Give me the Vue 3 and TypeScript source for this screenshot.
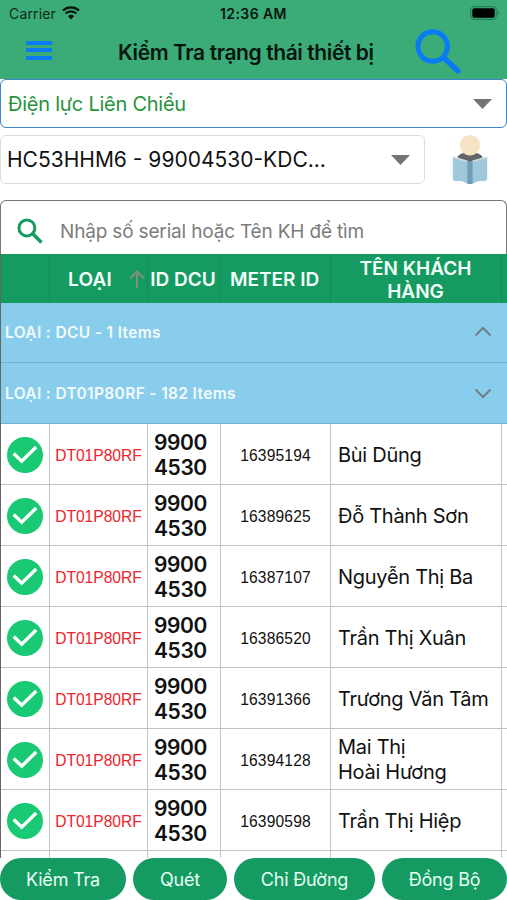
<script setup lang="ts">
interface Device {
  meter: string
  customer: string[]
}

interface Group {
  label: string
  open: boolean
}

const dcu = ['9900', '4530']
const groups: Group[] = [
  { label: 'LOẠI : DCU - 1 Items', open: false },
  { label: 'LOẠI : DT01P80RF - 182 Items', open: true },
]
const devices: Device[] = [
  { meter: '16395194', customer: ['Bùi Dũng'] },
  { meter: '16389625', customer: ['Đỗ Thành Sơn'] },
  { meter: '16387107', customer: ['Nguyễn Thị Ba'] },
  { meter: '16386520', customer: ['Trần Thị Xuân'] },
  { meter: '16391366', customer: ['Trương Văn Tâm'] },
  { meter: '16394128', customer: ['Mai Thị', 'Hoài Hương'] },
  { meter: '16390598', customer: ['Trần Thị Hiệp'] },
]
const actions: string[] = ['Kiểm Tra', 'Quét', 'Chỉ Đường', 'Đồng Bộ']
</script>

<template>
  <div class="screen">
    <header class="top">
      <div class="status">
        <span class="carrier">Carrier</span>
        <svg class="wifi" width="18" height="14" viewBox="0 0 18 14">
          <path d="M9 13.5 6 10.2a4.3 4.3 0 0 1 6 0z" fill="#07150e" />
          <path d="M3.6 7.5a7.7 7.7 0 0 1 10.8 0M1 4.5a11.7 11.7 0 0 1 16 0" fill="none" stroke="#07150e" stroke-width="2.3" />
        </svg>
        <span class="clock">12:36 AM</span>
        <svg class="battery" width="30" height="14" viewBox="0 0 30 14">
          <rect x=".7" y=".7" width="25.6" height="12.6" rx="3.6" fill="none" stroke="#257f56" stroke-width="1.2" />
          <rect x="2.3" y="2.3" width="22.4" height="9.4" rx="2" fill="#000" />
          <path d="M27.5 4.8c2.2.7 2.2 3.7 0 4.4z" fill="#257f56" />
        </svg>
      </div>
      <div class="nav">
        <button class="menu" aria-label="Menu"><i></i><i></i><i></i></button>
        <h1>Kiểm Tra trạng thái thiết bị</h1>
        <svg class="find" width="48" height="48" viewBox="0 0 48 48" fill="none" stroke="#087bf5">
          <circle cx="17.700" cy="18.500" r="14.700" stroke-width="5" />
          <path d="M29 30 42.800 42.800" stroke-width="5.600" stroke-linecap="round" />
        </svg>
      </div>
    </header>

    <div class="select unit">
      <span>Điện lực Liên Chiểu</span>
      <svg width="19" height="10" viewBox="0 0 19 10"><path d="M0 0h19L9.500 10z" fill="#747474" /></svg>
    </div>

    <div class="station-row">
      <div class="select station">
        <span>HC53HHM6 - 99004530-KDC...</span>
        <svg width="19" height="10" viewBox="0 0 19 10"><path d="M0 0h19L9.500 10z" fill="#747474" /></svg>
      </div>
      <svg class="reader" width="36" height="50" viewBox="0 0 36 50">
        <path d="M5.500 22.500c1-3.500 5-5 12.500-5s11.500 1.500 12.500 5L20 28h-4z" fill="#626467" />
        <circle cx="18" cy="10.300" r="10.200" fill="#f5e3c3" />
        <path d="M3 43h30v3H3z" fill="#536c78" />
        <path d="M.8 22.500 18 27v22q-3 0-5-1.500-2-1.500-5-1.500H3.800q-3 0-3-3z" fill="#9fc9db" />
        <path d="M35.200 22.500 18 27v22q3 0 5-1.500 2-1.500 5-1.500h4.200q3 0 3-3z" fill="#9fc9db" />
        <path d="M1 22.300 15.500 26.300M35 22.300 20.500 26.300" stroke="#d3d9db" stroke-width="1.500" />
        <path d="M15.400 26.300h5.200v22.200q-2.600 1-5.200 0z" fill="#719db5" />
      </svg>
    </div>

    <div class="search">
      <svg width="26" height="26" viewBox="0 0 26 26" fill="none" stroke="#159b62">
        <circle cx="9.900" cy="9.900" r="8" stroke-width="3" />
        <path d="m15.500 15.500 9 9" stroke-width="3.600" />
      </svg>
      <span>Nhập số serial hoặc Tên KH để tìm</span>
    </div>

    <main class="table">
      <div class="cols head">
        <div></div>
        <div class="sorted">
          <span>LOẠI</span>
          <svg width="16" height="18" viewBox="0 0 16 18" fill="none" stroke="#809080" stroke-width="2">
            <path d="M8 18V2M1 8.500 8 1.500l7 7" />
          </svg>
        </div>
        <div><span class="h-dcu">ID DCU</span></div>
        <div><span class="h-meter">METER ID</span></div>
        <div><span class="h-name">TÊN KHÁCH<br />HÀNG</span></div>
        <div></div>
      </div>

      <div v-for="g in groups" :key="g.label" class="group">
        <span>{{ g.label }}</span>
        <svg width="18" height="11" viewBox="0 0 18 11" fill="none" stroke="#6f7f89" stroke-width="2">
          <path :d="g.open ? 'M1.500 1.500 9 9l7.500-7.500' : 'M1.500 9.500 9 2l7.500 7.500'" />
        </svg>
      </div>

      <div v-for="d in devices" :key="d.meter" class="cols row">
        <div>
          <svg width="36" height="36" viewBox="0 0 36 36">
            <circle cx="18" cy="18" r="18" fill="#19c973" />
            <path d="m6.700 16.500 8 7.700 14.500-14.200" fill="none" stroke="#fff" stroke-width="3.400" />
          </svg>
        </div>
        <div class="type">DT01P80RF</div>
        <div class="dcu"><span v-for="part in dcu" :key="part">{{ part }}</span></div>
        <div class="meter">{{ d.meter }}</div>
        <div class="name"><span v-for="part in d.customer" :key="part">{{ part }}</span></div>
        <div></div>
      </div>
      <div class="cols row tail"><div v-for="n in 6" :key="n"></div></div>
    </main>

    <footer class="actions">
      <button v-for="a in actions" :key="a">{{ a }}</button>
    </footer>
  </div>
</template>

<style>
body {
  margin: 0;
  background: #fff;
}
</style>

<style scoped>
.screen {
  width: 507px;
  height: 900px;
  display: flex;
  flex-direction: column;
  overflow: hidden;
  background: #fff;
  font-family: Inter, "Liberation Sans", sans-serif;
  color: #111;
}
.screen * {
  box-sizing: border-box;
}
svg {
  display: block;
  flex: none;
}
.top {
  height: 79px;
  flex: none;
  background: #3bab78;
}
.status {
  height: 27px;
  display: grid;
  grid-template-columns: 62px 158px 250px 37px;
  align-items: center;
}
.wifi,
.battery {
  margin-top: -2px;
}
.carrier {
  padding-left: 9px;
  font-size: 14px;
  letter-spacing: 0.15px;
  color: #0c2b1d;
}
.clock {
  font-size: 14px;
  font-weight: 600;
  letter-spacing: 0.42px;
  white-space: nowrap;
  color: #06150e;
}
.nav {
  height: 52px;
  display: grid;
  grid-template-columns: 118px 297px 92px;
  align-items: center;
}
.menu {
  display: flex;
  flex-direction: column;
  gap: 3.500px;
  width: 26px;
  margin: -6px 0 0 26px;
  padding: 0;
  border: 0;
  background: none;
}
.menu i {
  height: 4px;
  background: #087bf5;
}
h1 {
  margin: 0;
  font-size: 21px;
  line-height: 28px;
  font-weight: 600;
  letter-spacing: -0.4px;
  white-space: nowrap;
  color: #06150e;
}
.find {
  margin-top: -2px;
}
.select {
  display: flex;
  align-items: center;
  justify-content: space-between;
  height: 49px;
  padding: 0 14px 0 6px;
  border-radius: 6px;
  white-space: nowrap;
}
.unit {
  flex: none;
  padding-left: 7px;
  border: 1.500px solid #3f85cc;
  font-size: 20px;
  letter-spacing: -0.25px;
  color: #26933c;
}
.station-row {
  flex: none;
  display: flex;
  gap: 27px;
  margin-top: 7px;
}
.station {
  width: 425px;
  border: 1.500px solid #dcdcde;
  font-size: 21px;
}
.search {
  flex: none;
  height: 54px;
  margin-top: 15px;
  padding: 7px 0 0 16px;
  display: flex;
  align-items: center;
  gap: 17px;
  border: 1.500px solid #777;
  border-bottom: 0;
  border-radius: 6px 6px 0 0;
  font-size: 19px;
  letter-spacing: -0.17px;
  color: #7c7c7c;
  white-space: nowrap;
}
.table {
  flex: 1;
  min-height: 0;
  overflow: hidden;
  border-left: 1px solid #666;
}
.cols {
  display: grid;
  grid-template-columns: 49px 98px 73px 110px 171px 5px;
}
.cols > div {
  display: flex;
  align-items: center;
  justify-content: center;
  border-right: 1px solid #c4c4c4;
  white-space: nowrap;
}
.cols > div:last-child {
  border-right: 0;
}
.head {
  height: 49px;
  background: #159b62;
  font-size: 19px;
  line-height: 23px;
  font-weight: 600;
  color: #f3fff8;
  text-align: center;
}
.head > div {
  padding-top: 2px;
  border-color: #168b5a;
}
.head .sorted {
  justify-content: space-between;
  padding: 1px 2px 0 18px;
  letter-spacing: 0.2px;
}
.h-dcu,
.h-meter {
  margin-right: 2px;
}
.h-name {
  margin-right: 1px;
}
.group {
  height: 60px;
  padding: 0 15px 0 4px;
  display: flex;
  align-items: center;
  justify-content: space-between;
  border-bottom: 1px solid #72afca;
  background: #88cdeb;
  font-size: 15.500px;
  font-weight: 600;
  letter-spacing: 0.35px;
  color: #f3fbff;
}
.group svg {
  margin-top: -2px;
}
.group + .group {
  height: 61px;
}
.group + .group svg {
  margin-top: 0;
}
.row {
  height: 61px;
}
.row > div {
  padding-top: 1px;
  border-bottom: 1px solid #c4c4c4;
}
.row .type,
.row .meter {
  padding-top: 3px;
  font-family: "Liberation Sans", Arial, sans-serif;
  font-size: 15.600px;
}
.row .meter {
  letter-spacing: 0.15px;
}
.row .type {
  color: #f0242a;
}
.row .dcu,
.row .name {
  flex-direction: column;
  align-items: flex-start;
  padding-left: 7px;
  font-size: 21px;
  line-height: 25px;
}
.row .dcu {
  padding-left: 6px;
  font-weight: 600;
  letter-spacing: -0.4px;
}
.row .name {
  padding-top: 2px;
  font-size: 20px;
  letter-spacing: -0.28px;
}
.actions {
  height: 42px;
  flex: none;
  display: grid;
  grid-template-columns: 126px 94px 141px 125px;
  gap: 7px;
}
.actions button {
  padding: 0;
  border: 0;
  border-radius: 21px;
  background: #159b62;
  font: 400 18px Inter, sans-serif;
  letter-spacing: -0.2px;
  color: #e6fff2;
  white-space: nowrap;
}
</style>
